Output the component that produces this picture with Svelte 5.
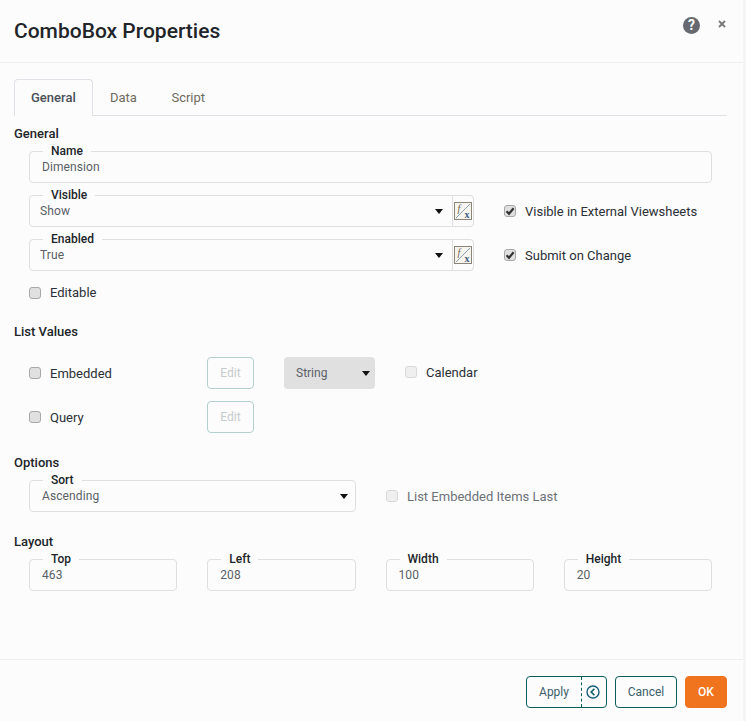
<script>
  const layout = [
    { label: "Top", value: "463" },
    { label: "Left", value: "208" },
    { label: "Width", value: "100" },
    { label: "Height", value: "20" },
  ];
</script>

{#snippet check(on = false, disabled = false)}
  <span class="check" class:disabled>
    {#if on}
      <svg viewBox="0 0 12 12" width="12" height="12" aria-hidden="true">
        <path d="M2.6 6.2 5 8.8 9.6 3.2" fill="none" stroke="#333" stroke-width="2.2" />
      </svg>
    {/if}
  </span>
{/snippet}

{#snippet arrow()}
  <svg class="arrow" viewBox="0 0 8 5" width="8" height="5" aria-hidden="true">
    <path d="M0 0h8L4 5z" fill="#111" />
  </svg>
{/snippet}

{#snippet fx()}
  <button class="fx" aria-label="Formula">
    <svg viewBox="0 0 18 18" width="18" height="18" aria-hidden="true">
      <rect x="0.5" y="0.5" width="17" height="17" fill="#f6f4ee" stroke="#8a8578" />
      <path d="M2 16 16 2" stroke="#8fa0af" stroke-width="1" />
      <text x="3.5" y="9.5" class="fx-f">f</text>
      <text x="10.5" y="15.5" class="fx-x">x</text>
    </svg>
  </button>
{/snippet}

<div class="dialog">
  <header class="head">
    <h1>ComboBox Properties</h1>
    <div class="head-icons">
      <span class="help">?</span>
      <svg class="close" viewBox="0 0 8 8" width="8" height="8" aria-label="Close">
        <path d="M1 1l6 6M7 1 1 7" stroke="#777" stroke-width="1.8" />
      </svg>
    </div>
  </header>

  <main class="body">
    <nav class="tabs">
      <span class="tab active">General</span>
      <span class="tab">Data</span>
      <span class="tab">Script</span>
    </nav>

    <h2 class="first">General</h2>
    <div class="group">
      <fieldset>
        <legend>Name</legend>
        <div class="value">Dimension</div>
      </fieldset>

      <div class="split">
        <div class="with-fx">
          <fieldset>
            <legend>Visible</legend>
            <div class="value select">Show {@render arrow()}</div>
          </fieldset>
          {@render fx()}
        </div>
        <label class="opt">{@render check(true)} Visible in External Viewsheets</label>
      </div>

      <div class="split">
        <div class="with-fx">
          <fieldset>
            <legend>Enabled</legend>
            <div class="value select">True {@render arrow()}</div>
          </fieldset>
          {@render fx()}
        </div>
        <label class="opt">{@render check(true)} Submit on Change</label>
      </div>

      <label class="opt editable">{@render check()} Editable</label>
    </div>

    <h2 class="list-head">List Values</h2>
    <div class="list-values">
      <div class="list-row">
        <label class="opt name">{@render check()} Embedded</label>
        <button class="edit" disabled>Edit</button>
        <div class="type">String {@render arrow()}</div>
        <label class="opt calendar">{@render check(false, true)} Calendar</label>
      </div>
      <div class="list-row">
        <label class="opt name">{@render check()} Query</label>
        <button class="edit" disabled>Edit</button>
      </div>
    </div>

    <h2 class="options-head">Options</h2>
    <div class="sort-row">
      <fieldset class="sort">
        <legend>Sort</legend>
        <div class="value select">Ascending {@render arrow()}</div>
      </fieldset>
      <label class="opt muted">{@render check(false, true)} List Embedded Items Last</label>
    </div>

    <h2 class="layout-head">Layout</h2>
    <div class="layout-grid">
      {#each layout as f}
        <fieldset>
          <legend>{f.label}</legend>
          <div class="value">{f.value}</div>
        </fieldset>
      {/each}
    </div>
  </main>

  <footer class="foot">
    <div class="apply">
      <span class="apply-label">Apply</span>
      <span class="apply-toggle">
        <svg viewBox="0 0 14 14" width="14" height="14" aria-hidden="true">
          <circle cx="7" cy="7" r="6" fill="none" stroke="#17607c" stroke-width="1.4" />
          <path d="M8.4 3.8 5.2 7l3.2 3.2" fill="none" stroke="#0b5c5a" stroke-width="1.6" />
        </svg>
      </span>
    </div>
    <button class="btn">Cancel</button>
    <button class="btn ok">OK</button>
  </footer>
</div>

<style>
  :global(body) {
    background: #f5f5f5;
  }

  .dialog {
    width: 743px;
    height: 721px;
    display: flex;
    flex-direction: column;
    background: #fcfcfc;
    font-family: Roboto, "Liberation Sans", sans-serif;
    font-size: 13px;
    color: #2b2f36;
    overflow: hidden;
  }

  .head {
    height: 62px;
    flex: none;
    display: flex;
    justify-content: space-between;
    padding: 0 17px 0 14px;
    border-bottom: 1px solid #eeeeee;
  }
  h1 {
    margin: 19px 0 0;
    font-size: 21px;
    line-height: 24px;
    font-weight: 500;
    color: #212529;
  }
  .head-icons {
    display: flex;
    align-items: flex-start;
    gap: 18px;
    padding-top: 17px;
  }
  .help {
    width: 17px;
    height: 17px;
    border-radius: 50%;
    background: #666a70;
    color: #fff;
    font-size: 14px;
    font-weight: 700;
    line-height: 17px;
    text-align: center;
  }
  .close {
    margin-top: 3px;
  }

  .body {
    flex: 1;
    padding: 16px 16px 0 14px;
  }

  .tabs {
    display: flex;
    height: 36px;
    border-bottom: 1px solid #dee2e6;
  }
  .tab {
    padding: 0 17.25px;
    line-height: 37px;
    color: #6f6a5c;
  }
  .tab.active {
    height: 37px;
    box-sizing: border-box;
    padding: 0 16px;
    line-height: 36px;
    font-weight: 500;
    color: #495057;
    background: #fcfcfc;
    border: 1px solid #dee2e6;
    border-bottom: 0;
    border-radius: 4px 4px 0 0;
  }

  h2 {
    margin: 0 0 2px;
    font-size: 13px;
    line-height: 16px;
    font-weight: 500;
    color: #212529;
  }
  h2.first {
    margin-top: 10px;
  }
  .list-head {
    margin-top: 19px;
  }
  .options-head {
    margin-top: 22px;
  }
  .layout-head {
    margin-top: 22px;
  }

  .group,
  .list-values,
  .sort-row,
  .layout-grid {
    margin: 0 15px;
  }
  .group {
    display: flex;
    flex-direction: column;
    gap: 5px;
  }

  fieldset {
    margin: 0;
    padding: 0 12px 1px;
    min-width: 0;
    border: 1px solid #dfdfdf;
    border-radius: 4px;
  }
  legend {
    margin-left: 1px;
    padding: 0 8px;
    font-size: 12px;
    line-height: 14px;
    font-weight: 500;
    color: #212529;
  }
  .value {
    height: 23px;
    line-height: 18px;
    font-size: 12px;
    color: #5a5f66;
    letter-spacing: 0.1px;
  }
  .select {
    display: flex;
    justify-content: space-between;
    align-items: flex-start;
  }
  .arrow {
    flex: none;
    margin: 7px -5px 0 0;
  }

  .split {
    display: flex;
    align-items: center;
  }
  .with-fx {
    position: relative;
    width: 445px;
    flex: none;
  }
  .with-fx fieldset {
    padding: 0 35px 1px 10px;
  }
  .with-fx legend {
    margin-left: 3px;
  }
  .fx {
    position: absolute;
    right: 0;
    bottom: 0;
    width: 22px;
    height: 32px;
    padding: 0;
    display: flex;
    align-items: center;
    justify-content: center;
    background: #fcfcfc;
    border: 1px solid #dfdfdf;
    border-radius: 0 4px 4px 0;
  }
  .fx-f {
    font: italic 400 10px "Liberation Serif", serif;
    fill: #6f6250;
  }
  .fx-x {
    font: 700 10px "Liberation Serif", serif;
    fill: #3f5f7f;
  }

  .opt {
    display: inline-flex;
    align-items: center;
    gap: 9px;
    color: #2b2f36;
    white-space: nowrap;
  }
  .split .opt {
    margin: 7px 0 0 30px;
  }
  .editable {
    margin-top: 5px;
    line-height: 24px;
  }
  .check {
    width: 12px;
    height: 12px;
    flex: none;
    box-sizing: border-box;
    display: inline-block;
    background: #e0e0e0;
    border: 1px solid #a8a8a8;
    border-radius: 3px;
    position: relative;
  }
  .check svg {
    position: absolute;
    left: -1px;
    top: -1px;
  }
  .check.disabled {
    background: #efefef;
    border-color: #d8d8d8;
  }

  .list-values {
    margin-top: 17px;
    display: flex;
    flex-direction: column;
    gap: 12px;
  }
  .list-row {
    display: flex;
    align-items: center;
    height: 32px;
  }
  .name {
    width: 178px;
    flex: none;
  }
  .edit {
    width: 47px;
    height: 32px;
    padding: 0;
    font: 12px Roboto, sans-serif;
    color: #c6cbcc;
    background: transparent;
    border: 1px solid #b3d0ce;
    border-radius: 4px;
  }
  .type {
    width: 91px;
    height: 32px;
    margin-left: 30px;
    box-sizing: border-box;
    padding: 0 5px 0 12px;
    display: flex;
    align-items: center;
    justify-content: space-between;
    font-size: 12px;
    color: #5a5f66;
    background: #e0e0e0;
    border-radius: 4px;
  }
  .type .arrow {
    margin: 0;
  }
  .calendar {
    margin: 0 0 2px 30px;
  }
  .muted {
    color: #6c7277;
  }

  .sort-row {
    display: flex;
    align-items: center;
  }
  .sort {
    width: 327px;
    box-sizing: border-box;
    flex: none;
  }
  .sort-row .opt {
    margin: 7px 0 0 30px;
  }

  .layout-grid {
    display: grid;
    grid-template-columns: repeat(4, 1fr);
    gap: 30px;
  }

  .foot {
    height: 62px;
    flex: none;
    box-sizing: border-box;
    display: flex;
    justify-content: flex-end;
    gap: 8px;
    padding: 16px 16px 0 0;
    border-top: 1px solid #eeeeee;
  }
  .apply {
    display: flex;
    height: 32px;
    box-sizing: border-box;
    border: 1px solid #0b5c5a;
    border-radius: 4px;
    color: #3b5f6b;
    font-size: 12px;
    line-height: 30px;
  }
  .apply-label {
    width: 54px;
    text-align: center;
    border-right: 1px dashed #0b5c5a;
  }
  .apply-toggle {
    width: 24px;
    box-sizing: border-box;
    padding-right: 2px;
    display: flex;
    align-items: center;
    justify-content: center;
  }
  .btn {
    height: 32px;
    width: 62px;
    padding: 0;
    font: 12px Roboto, sans-serif;
    color: #3b5f6b;
    background: transparent;
    border: 1px solid #0b5c5a;
    border-radius: 4px;
  }
  .btn.ok {
    width: 42px;
    color: #fff;
    font-weight: 500;
    background: #f0731e;
    border-color: #f0731e;
  }
</style>
